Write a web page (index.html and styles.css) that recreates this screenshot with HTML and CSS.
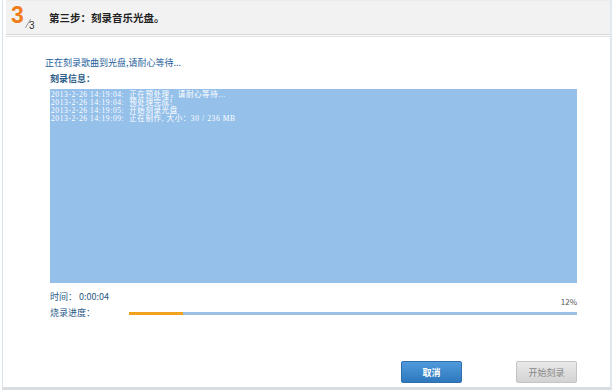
FILE: index.html
```html
<!DOCTYPE html>
<html>
<head>
<meta charset="utf-8">
<link rel="stylesheet" href="styles.css">
</head>
<body>
<div class="win">
  <div class="head">
    <div class="step">
      <span class="big">3</span>
      <span class="slash"></span>
      <span class="small">3</span>
    </div>
    <div class="title">第三步：刻录音乐光盘。</div>
  </div>
  <div class="body">
    <div class="status">正在刻录歌曲到光盘,请耐心等待...</div>
    <div class="label">刻录信息：</div>
    <div class="log">
      <div class="line">2013-2-26 14:19:04:&nbsp; 正在预处理，请耐心等待...</div>
      <div class="line">2013-2-26 14:19:04:&nbsp; 预处理完成!</div>
      <div class="line">2013-2-26 14:19:05:&nbsp; 开始刻录光盘</div>
      <div class="line">2013-2-26 14:19:09:&nbsp; 正在制作, 大小：30 / 236 MB</div>
    </div>
    <div class="time">时间： 0:00:04</div>
    <div class="pct">12%</div>
    <div class="prog">
      <span class="plabel">烧录进度：</span>
      <div class="bar"><div class="fill" style="width:12%"></div></div>
    </div>
    <div class="btns">
      <button class="btn cancel">取消</button>
      <button class="btn start">开始刻录</button>
    </div>
  </div>
</div>
</body>
</html>
```
FILE: styles.css
```css
html, body { margin: 0; padding: 0; background: #fff; }
body { width: 612px; height: 392px; overflow: hidden; font-family: "Noto Sans CJK SC", "Liberation Sans", sans-serif; }
.win {
  box-sizing: border-box;
  width: 610px; height: 390px;
  margin-left: 2px;
  border-left: 1px solid #d6e4ee;
  border-right: 2px solid #dfe8ee;
  border-bottom: 3px solid #d9dcdf;
  background: #fff;
  display: flex; flex-direction: column;
}
.head {
  height: 33px;
  margin-left: 3px;
  background: #f2f2f2;
  border-top: 1px solid #ebebeb;
  border-bottom: 1px solid #d8d8d8;
  box-shadow: 0 1px 0 #fafafa, 0 2px 0 #e2e2e2;
  display: flex; align-items: center;
}
.step { position: relative; width: 37px; height: 33px; flex: none; }
.big { position: absolute; left: 5px; top: 2px; color: #f07d1a; font: bold 23px/24px "Liberation Sans", sans-serif; }
.slash { position: absolute; left: 17px; top: 22px; width: 10px; height: 1px; background: #999; transform: rotate(-58deg); }
.small { position: absolute; left: 23px; top: 19px; color: #333; font: 10px/12px "Liberation Sans", sans-serif; }
.title { margin-left: 6px; font-size: 10.5px; color: #222; font-weight: bold; }
.body { flex: 1; padding: 21px 33px 0 42px; display: flex; flex-direction: column; }
.status { font-size: 9px; line-height: 14px; color: #1d5d9b; }
.label { margin: 3px 0 0 5px; font-size: 9px; line-height: 12px; color: #2a5a86; font-weight: bold; }
.log {
  margin: 4px 0 0 5px; height: 194px; background: #94c0ea;
  padding: 2px 0 0 1px; box-sizing: border-box;
}
.line { font: 7.5px/8px "Liberation Serif", "Noto Sans CJK SC", serif; letter-spacing: 0.6px; color: #fff; white-space: nowrap; }
.time { margin: 8px 0 0 5px; font-size: 9px; line-height: 12px; color: #2a5a86; }
.pct { align-self: flex-end; font-size: 8px; line-height: 10px; color: #555; margin-top: -6px; }
.prog { display: flex; align-items: center; margin: 0 0 0 5px; }
.plabel { width: 79px; font-size: 9px; line-height: 12px; color: #2a5a86; }
.bar { flex: 1; height: 3px; background: #9cc0e2; }
.fill { height: 100%; background: #f0a11d; }
.btns { margin-top: 42px; display: flex; justify-content: flex-end; gap: 54px; }
.btn { width: 61px; height: 22px; font: bold 9px "Noto Sans CJK SC", sans-serif; border-radius: 2px; padding: 0; }
.cancel { background: linear-gradient(#4f9adb, #2e78be); border: 1px solid #2f6fae; color: #fff; }
.start { background: linear-gradient(#e9e9e9, #d3d3d3); border: 1px solid #c4c4c4; color: #888; font-weight: normal; }
```
